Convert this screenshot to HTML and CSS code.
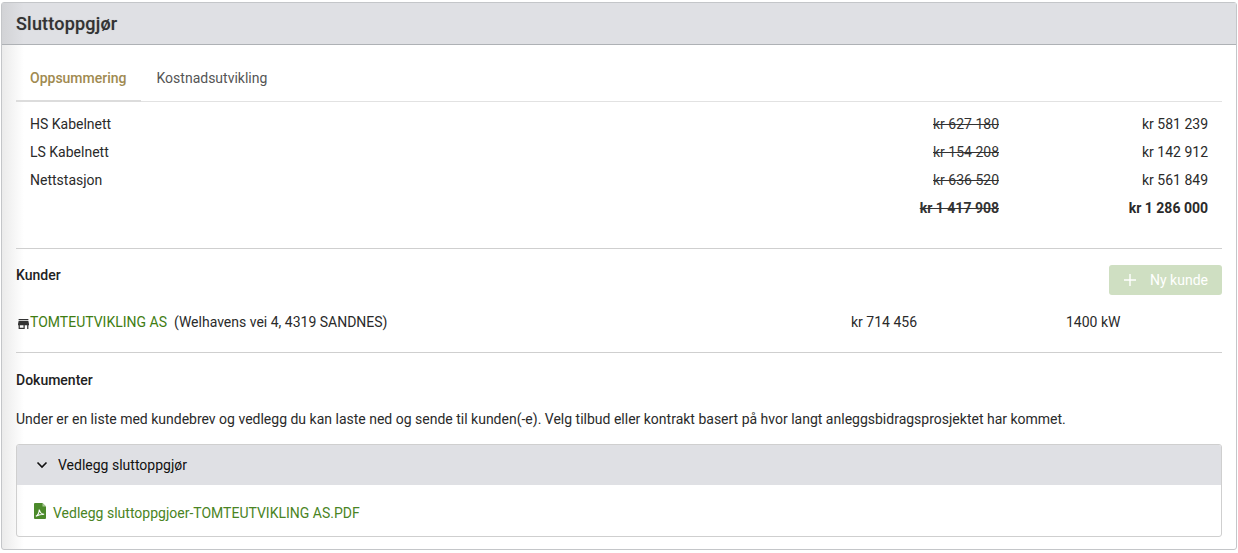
FILE: index.html
```html
<!DOCTYPE html>
<html lang="no">
<head>
<meta charset="utf-8">
<title>Sluttoppgjør</title>
<link rel="stylesheet" href="styles.css">
</head>
<body>
<section class="card">
  <header class="card-head"><h1>Sluttoppgjør</h1></header>
  <div class="card-body">
    <nav class="tabs">
      <span class="tab active">Oppsummering</span>
      <span class="tab">Kostnadsutvikling</span>
    </nav>
    <div class="summary">
      <div class="row"><span class="name">HS Kabelnett</span><s class="old">kr 627 180</s><span class="new">kr 581 239</span></div>
      <div class="row"><span class="name">LS Kabelnett</span><s class="old">kr 154 208</s><span class="new">kr 142 912</span></div>
      <div class="row"><span class="name">Nettstasjon</span><s class="old">kr 636 520</s><span class="new">kr 561 849</span></div>
      <div class="row total"><span class="name"></span><s class="old">kr 1 417 908</s><span class="new">kr 1 286 000</span></div>
    </div>
    <hr class="rule rule-a">
    <div class="customers-head">
      <h2 class="customers-title">Kunder</h2>
      <button class="add" disabled>
        <svg class="plus" viewBox="0 0 14 14" width="14" height="14"><path d="M7 1v12M1 7h12" stroke="#fff" stroke-width="1.4" fill="none"/></svg>
        <span>Ny kunde</span>
      </button>
    </div>
    <div class="customer">
      <span class="who">
        <svg class="store" viewBox="3 4 18 16" width="11" height="10"><path fill="#333" d="M20 4H4v2h16V4zm1 10v-2l-1-5H4l-1 5v2h1v6h10v-6h4v6h2v-6h1zm-9 4H6v-4h6v4z"/></svg><a class="link">TOMTEUTVIKLING AS</a><span class="addr">(Welhavens vei 4, 4319 SANDNES)</span>
      </span>
      <span class="amount">kr 714 456</span>
      <span class="power">1400 kW</span>
    </div>
    <hr class="rule rule-b">
    <h2 class="docs-title">Dokumenter</h2>
    <p class="intro">Under er en liste med kundebrev og vedlegg du kan laste ned og sende til kunden(-e). Velg tilbud eller kontrakt basert på hvor langt anleggsbidragsprosjektet har kommet.</p>
    <div class="panel">
      <div class="panel-head">
        <svg viewBox="0 0 12 8" width="12" height="8"><path d="M1.500 1.500 6 6l4.500-4.500" stroke="#111" stroke-width="1.6" fill="none"/></svg>
        <span>Vedlegg sluttoppgjør</span>
      </div>
      <div class="panel-body">
        <svg class="pdf" viewBox="0 0 12 16" width="12" height="16"><path fill="#4c8a2b" d="M1 0h7.500L12 3.500V15a1 1 0 0 1-1 1H1a1 1 0 0 1-1-1V1a1 1 0 0 1 1-1z"/><path fill="#a9c796" d="M8.500 0 12 3.500H8.500z"/><path fill="none" stroke="#fff" stroke-width="1.100" d="M1.800 13.300c2-1 3.300-3.800 3.500-6.800.6 2.900 2.200 4.600 4.900 4.800-2.800 0-5.900.7-8.400 2z"/></svg>
        <a class="link file">Vedlegg sluttoppgjoer-TOMTEUTVIKLING AS.PDF</a>
      </div>
    </div>
  </div>
</section>
</body>
</html>
```
FILE: styles.css
```css
* { box-sizing: border-box; }
html, body { margin: 0; height: 100%; background: #fff; }
body {
  padding: 2px 1px 3px 1px;
  font-family: Roboto, "Liberation Sans", sans-serif;
  font-size: 14px;
  color: #2a2a2a;
  overflow: hidden;
}
.card {
  height: 548px;
  border: 1px solid #c4c6c9;
  border-radius: 3px;
  background: linear-gradient(90deg, #ebebeb 0, #fff 22px);
  display: flex;
  flex-direction: column;
}
.card-head {
  height: 42px;
  flex: none;
  display: flex;
  align-items: center;
  padding-left: 14px;
  background: linear-gradient(90deg, #d2d3d6 0, #dfe0e4 22px);
  border-bottom: 1px solid #aeb1b5;
}
h1 { margin: 0; font-size: 18px; font-weight: 500; color: #333; letter-spacing: 0.2px; text-shadow: 0 0 1px rgba(0, 0, 0, .25); }
.card-body { padding: 0 14px; flex: 1; }
.tabs { display: flex; height: 57px; align-items: stretch; border-bottom: 1px solid #e2e2e2; }
.tab { padding: 10px 14px 0 16px; display: flex; align-items: center; color: #555; }
.tab.active { color: #a08a50; font-weight: 500; padding: 10px 14px 0; border-bottom: 2px solid #dcdcdc; margin-bottom: -1px; }
.summary { padding-top: 8px; }
.row { display: flex; height: 28px; align-items: center; padding: 0 14px; }
.name { flex: 1; }
.old { width: 200px; text-align: right; color: #333; }
.new { width: 209px; text-align: right; }
.total { font-weight: 700; }
.rule { border: 0; border-top: 1px solid #cfcfcf; margin: 0; }
.rule-a { margin-top: 26px; }
.customers-head { display: flex; justify-content: space-between; align-items: flex-start; height: 50px; padding-top: 16px; }
.customers-title { margin-top: 2px; }
h2 { margin: 0; font-size: 14px; font-weight: 500; color: #222; }
.add {
  width: 113px; height: 30px; border: 0; border-radius: 3px;
  background: #cfdfc2; color: #fff; font: inherit; white-space: nowrap;
  display: flex; align-items: center; gap: 13px; padding: 0 14px;
}
.plus { flex: none; }
.customer { display: flex; align-items: center; height: 53px; padding-bottom: 7px; }
.who { width: 835px; display: flex; align-items: center; }
.store { margin: 4px 1px 0 2px; flex: none; }
.link { color: #3f7d12; }
.addr { margin-left: 7px; }
.amount { width: 215px; }
.docs-title { margin-top: 19px; }
.intro { margin: 23px 0 17px; }
.panel { border: 1px solid #cfcfcf; border-radius: 3px; height: 93px; overflow: hidden; }
.panel-head { height: 40px; background: #dfe0e4; display: flex; align-items: center; gap: 10px; padding-left: 19px; color: #111; }
.panel-body { display: flex; align-items: flex-start; gap: 7px; padding: 18px 0 0 17px; }
.file { color: #4a8424; margin-top: 2px; }
```
